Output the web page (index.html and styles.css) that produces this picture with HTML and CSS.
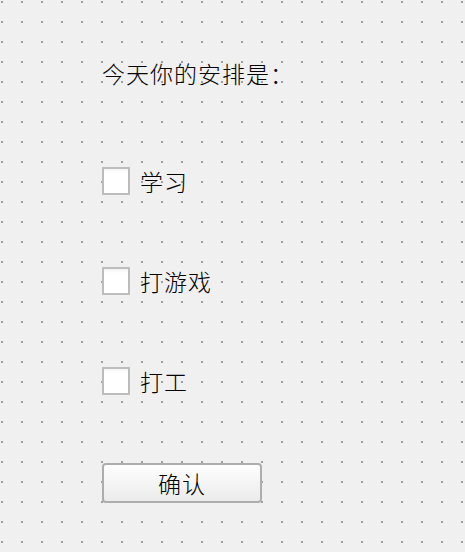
FILE: index.html
```html
<!DOCTYPE html>
<html lang="zh">
<head>
<meta charset="utf-8">
<link rel="stylesheet" href="styles.css">
</head>
<body>
<div class="form">
  <div class="title">今天你的安排是：</div>
  <div class="options">
    <label class="option"><span class="box"></span><span class="text">学习</span></label>
    <label class="option"><span class="box"></span><span class="text">打游戏</span></label>
    <label class="option"><span class="box"></span><span class="text">打工</span></label>
  </div>
  <button class="confirm">确认</button>
</div>
</body>
</html>
```
FILE: styles.css
```css
html, body {
  margin: 0;
  padding: 0;
}
body {
  width: 465px;
  height: 552px;
  overflow: hidden;
  background-color: #f0f0f0;
  background-image: url("data:image/svg+xml,%3Csvg xmlns='http://www.w3.org/2000/svg' width='20' height='20' shape-rendering='crispEdges'%3E%3Crect x='1' y='1' width='2' height='2' fill='%23a0a0a0'/%3E%3C/svg%3E");
  background-size: 20px 20px;
  font-family: "Noto Sans CJK SC", "Noto Sans", sans-serif;
  color: #000;
}
.form {
  display: flex;
  flex-direction: column;
  align-items: flex-start;
  padding: 61px 0 0 102px;
}
.title {
  font-size: 23px;
  line-height: 24px;
  letter-spacing: 1px;
  font-weight: 300;
}
.options {
  display: flex;
  flex-direction: column;
  gap: 72px;
  margin-top: 82px;
}
.option {
  display: flex;
  align-items: center;
  gap: 10px;
  height: 28px;
}
.box {
  width: 24px;
  height: 24px;
  border: 2px solid #bdbdbd;
  background: linear-gradient(to bottom, #f4f4f4 0, #ffffff 4px, #ffffff 100%);
  flex: none;
}
.text {
  font-size: 23px;
  line-height: 28px;
  letter-spacing: 1px;
  font-weight: 300;
}
.confirm {
  margin-top: 68px;
  width: 160px;
  height: 40px;
  border: 2px solid #adadad;
  border-radius: 4px;
  background: linear-gradient(to bottom, #fdfdfd 0%, #f3f3f3 60%, #ebebeb 100%);
  font-family: "Noto Sans CJK SC", "Noto Sans", sans-serif;
  font-size: 23px;
  font-weight: 300;
  line-height: 36px;
  letter-spacing: 1px;
  padding: 0;
  color: #000;
}
```
